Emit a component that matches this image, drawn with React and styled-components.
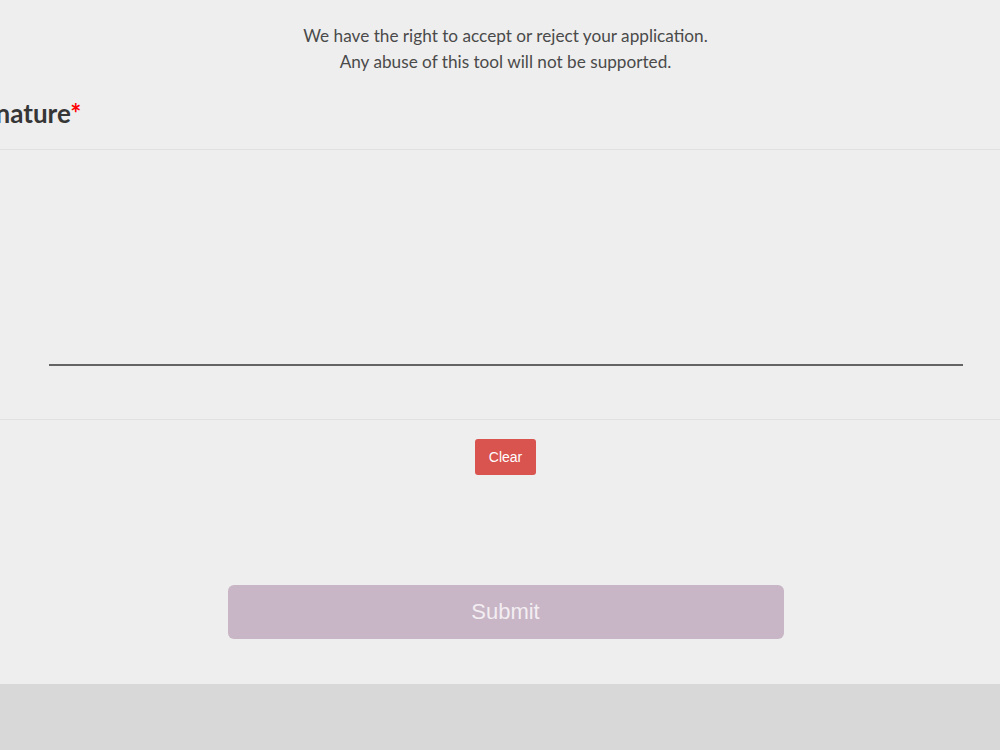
import React from "react";
import styled, { createGlobalStyle } from "styled-components";

const Global = createGlobalStyle`
  html, body { margin: 0; padding: 0; background: #eeeeee; overflow: hidden; }
  * { box-sizing: border-box; }
`;

const Page = styled.div`
  width: 1000px;
  height: 750px;
  display: flex;
  flex-direction: column;
  background: #eeeeee;
  font-family: Lato, "Open Sans", sans-serif;
  overflow: hidden;
`;

const Main = styled.main`
  flex: 1;
  display: flex;
  flex-direction: column;
`;

const Notice = styled.p`
  margin: 0;
  padding: 23px 0 0 11px;
  text-align: center;
  font-size: 17.2px;
  line-height: 26px;
  color: #4a4a4a;
`;

const Heading = styled.h2`
  margin: 22px 0 0 -39px;
  font-size: 26px;
  line-height: 32px;
  font-weight: 700;
  color: #363636;
  height: 53px;
  border-bottom: 1px solid #e0e0e0;
`;

const Req = styled.span`
  color: #ff0000;
`;

const PadArea = styled.div`
  height: 270px;
  padding: 214px 0 0 11px;
  border-bottom: 1px solid #e0e0e0;
`;

const SignLine = styled.div`
  width: 914px;
  height: 2px;
  margin: 0 auto;
  background: #646464;
`;

const Actions = styled.div`
  display: flex;
  flex-direction: column;
  align-items: center;
  padding: 19px 0 0 11px;
`;

const ClearButton = styled.button`
  width: 61px;
  height: 36px;
  border: none;
  border-radius: 3px;
  background: #d9534f;
  color: #ffffff;
  font-family: "Liberation Sans", Arial, sans-serif;
  font-size: 14px;
  padding: 0;
`;

const SubmitButton = styled.button`
  margin-top: 110px;
  width: 556px;
  height: 54px;
  border: none;
  border-radius: 6px;
  background: #c8b5c6;
  color: #f3eef2;
  font-family: "Liberation Sans", Arial, sans-serif;
  font-size: 22px;
  padding: 0;
`;

const Footer = styled.footer`
  height: 66px;
  background: #d8d8d8;
`;

export default function App() {
  return (
    <>
      <Global />
      <Page>
        <Main>
          <Notice>
            We have the right to accept or reject your application.
            <br />
            Any abuse of this tool will not be supported.
          </Notice>
          <Heading>
            Signature<Req>*</Req>
          </Heading>
          <PadArea>
            <SignLine />
          </PadArea>
          <Actions>
            <ClearButton>Clear</ClearButton>
            <SubmitButton>Submit</SubmitButton>
          </Actions>
        </Main>
        <Footer />
      </Page>
    </>
  );
}
